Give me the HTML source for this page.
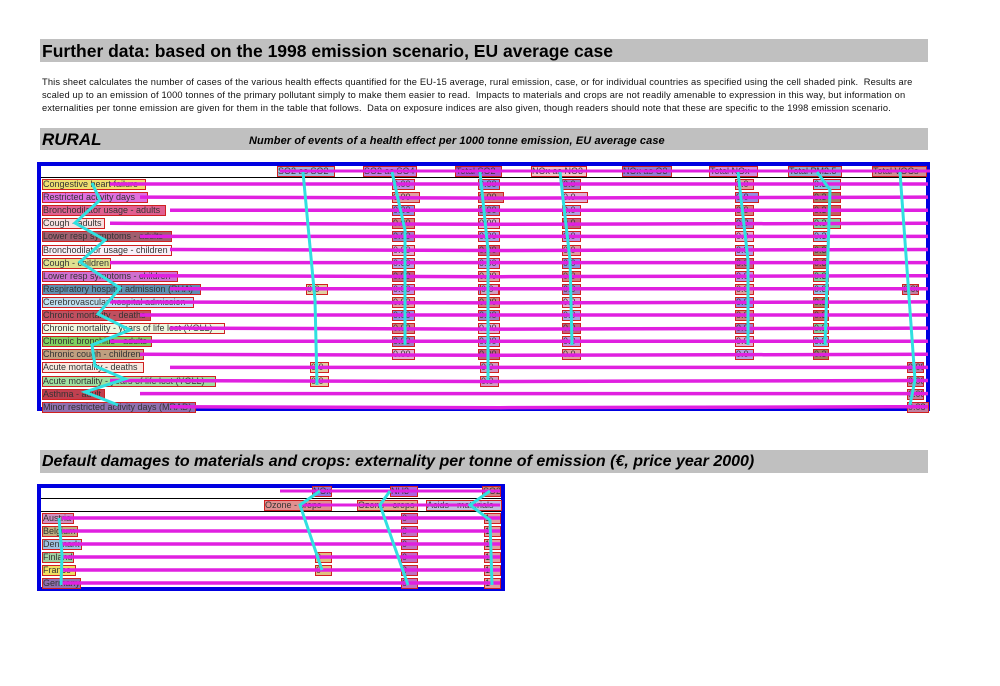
<!DOCTYPE html>
<html><head><meta charset="utf-8">
<style>
body{margin:0;width:1000px;height:686px;background:#fff;position:relative;overflow:hidden;font-family:"Liberation Sans",sans-serif}
.a{position:absolute;white-space:nowrap}
.bar{position:absolute;background:#c0c0c0}
.c{position:absolute;border:1px solid #d02020;font-size:9px;line-height:9px;height:9px;color:#333;white-space:nowrap;overflow:hidden;box-sizing:content-box}
.p{font-size:9.3px;color:#111;left:42px;letter-spacing:0.15px}
</style></head><body>
<div class="bar" style="left:40px;top:39px;width:888px;height:23px"></div>
<div class="a" style="left:42px;top:41px;font-size:17.5px;font-weight:bold">Further data: based on the 1998 emission scenario, EU average case</div>
<div class="a p" style="top:77px">This sheet calculates the number of cases of the various health effects quantified for the EU-15 average, rural emission, case, or for individual countries as specified using the cell shaded pink.&nbsp; Results are</div>
<div class="a p" style="top:90px">scaled up to an emission of 1000 tonnes of the primary pollutant simply to make them easier to read.&nbsp; Impacts to materials and crops are not readily amenable to expression in this way, but information on</div>
<div class="a p" style="top:103px">externalities per tonne emission are given for them in the table that follows.&nbsp; Data on exposure indices are also given, though readers should note that these are specific to the 1998 emission scenario.</div>
<div class="bar" style="left:40px;top:128px;width:888px;height:22px"></div>
<div class="a" style="left:42px;top:130px;font-size:17px;font-weight:bold;font-style:italic">RURAL</div>
<div class="a" style="left:249px;top:135px;font-size:11px;font-weight:bold;font-style:italic;letter-spacing:0.1px">Number of events of a health effect per 1000 tonne emission, EU average case</div>
<div class="a" style="left:37px;top:162px;width:885px;height:241px;border:4px solid #0000e0"></div>
<div class="a" style="left:41px;top:177px;width:885px;height:1px;background:#000"></div>
<div class="bar" style="left:40px;top:450px;width:888px;height:23px"></div>
<div class="a" style="left:42px;top:453px;font-size:16px;font-weight:bold;font-style:italic">Default damages to materials and crops: externality per tonne of emission (€, price year 2000)</div>
<div class="a" style="left:37px;top:484px;width:460px;height:99px;border:4px solid #0000e0"></div>
<div class="a" style="left:41px;top:498px;width:460px;height:1px;background:#000"></div>
<div class="a" style="left:41px;top:511px;width:460px;height:1px;background:#000"></div>
<div id="g"></div>
<svg id="s" class="a" style="left:0;top:0" width="1000" height="686"></svg>
<script>
var g=document.getElementById('g'),h='';
function c(x,y,w,t,bg,fc){h+='<div class="c" style="left:'+x+'px;top:'+(y-5)+'px;width:'+w+'px;background:'+bg+';color:'+(fc||'#333')+'">'+t+'</div>';}
var heads=[[277,56,'SO2 as SO2','#a0b8d8'],[363,52,'SO2 as SO4','#c080e0'],[455,45,'Total SO2','#b050d0'],[531,54,'NOx as NO3','#f0c8c8'],[622,48,'NOx as O3','#9080d0'],[709,47,'Total NOx','#d090e0'],[788,52,'Total PM2.5','#90b0d0'],[872,53,'Total VOCs','#d09090']];
heads.forEach(function(e){c(e[0],171,e[1],e[2],e[3]);});
var rows=[['Congestive heart failure','#f0e070',102],['Restricted activity days','#e070e0',104],['Bronchodilator usage - adults','#e06090',122],['Cough - adults','#f8e0e0',61],['Lower resp symptoms - adults','#a06070',128],['Bronchodilator usage - children','#f8f0f8',128],['Cough - children','#e0e090',67],['Lower resp symptoms - children','#d070d0',134],['Respiratory hospital admission (RHA)','#6090b0',157],['Cerebrovascular hospital admission','#c0e0f0',150],['Chronic mortality - deaths','#c05060',107],['Chronic mortality - years of life lost (YOLL)','#f0f8e0',181],['Chronic bronchitis - adults','#80d060',108],['Chronic cough - children','#c0a080',100],['Acute mortality - deaths','#f8e8e0',100],['Acute mortality - years of life lost (YOLL)','#a0e0a0',172],['Asthma - adult','#c04050',61],['Minor restricted activity days (MRAD)','#9070b0',152]];
var pal=['#c090e0','#e0a0a0','#9090e0','#d08080','#a080c0','#e0b0d0','#b0a0e0','#c06080'];
var s='';
rows.forEach(function(r,i){var y=184+i*13.1;c(42,y,r[2],r[0],r[1]);
 s+='<polyline points="'+(110+(i%3)*30)+','+y+' 500,'+(y+ (i%2))+' 928,'+y+'" fill="none" stroke="#e020e0" stroke-width="3.5"/>';
 if(i<14){c(392,y,i==1?26:21,'0.00',pal[i%8]);c(478,y,i==1?24:20,'0.00',pal[(i+2)%8]);c(562,y,i==1?24:17,'0.0',pal[(i+4)%8]);c(735,y,i==1?22:17,'0.0',pal[(i+1)%8]);c(813,y,i<4?26:14,'0.3',['#90c0e0','#a08060','#c06060','#80d0a0'][i%4]||'#c0d0e0');}
 if(i==8||i==14||i==15){c(i==8?306:310,y,i==8?20:17,'0.0','#e0d0a0');c(480,y,17,'0.0','#d0a0c0');}
 if(i==8||i>=14)c(i==8?902:907,y,i==17?20:15,'0.08','#c080a0');
});
var cr=[['Austria','#d090c0',30],['Belgium','#c0b080',34],['Denmark','#a0c0e0',38],['Finland','#a0d0a0',30],['France','#f0e060',32],['Germany','#9070b0',37]];
c(312,491,18,'NOx','#9070e0');c(390,491,26,'NH3','#b060e0');c(482,491,17,'SO2','#d08080');
c(264,505,66,'Ozone - crops','#e09090');c(357,505,59,'Ozone - crops','#e0b090');c(426,505,74,'Acids - materials','#c0c0e0');
cr.forEach(function(r,i){var y=518+i*13;c(42,y,r[2],r[0],r[1]);c(401,y,15,'0','#c070c0');c(484,y,15,'1','#e0a0a0');if(i==3||i==4)c(315,y,15,'0','#e0c080');
 s+='<polyline points="62,'+y+' 250,'+y+' 500,'+y+'" fill="none" stroke="#e020e0" stroke-width="3.5"/>';});
s+='<polyline points="280,491 500,491" stroke="#e020e0" stroke-width="3"/><polyline points="300,505 500,505" stroke="#e020e0" stroke-width="3"/>';
s+='<polyline points="280,171 930,171" stroke="#e020e0" stroke-width="3"/>';
var cy='stroke="#30e0e0" stroke-width="3" fill="none"';
s+='<polyline '+cy+' points="92,183 100,200 75,223 105,240 80,262 120,288 98,314 130,330 92,345 95,366 125,379 85,392 118,405"/>';
s+='<polyline '+cy+' points="303,172 315,300 317,385"/><polyline '+cy+' points="392,172 405,230 405,345"/><polyline '+cy+' points="480,172 488,250 488,380"/><polyline '+cy+' points="560,172 570,260 572,345"/><polyline '+cy+' points="738,172 748,260 748,345"/><polyline '+cy+' points="817,172 830,190 825,345"/><polyline '+cy+' points="900,172 915,380 910,405"/>';
s+='<polyline '+cy+' points="59,518 62,555 61,585"/><polyline '+cy+' points="320,491 300,505 322,570"/><polyline '+cy+' points="390,491 380,505 408,585"/><polyline '+cy+' points="490,491 470,505 490,520 492,585"/>';
document.getElementById('s').innerHTML=s;g.innerHTML=h;
</script>
</body></html>
